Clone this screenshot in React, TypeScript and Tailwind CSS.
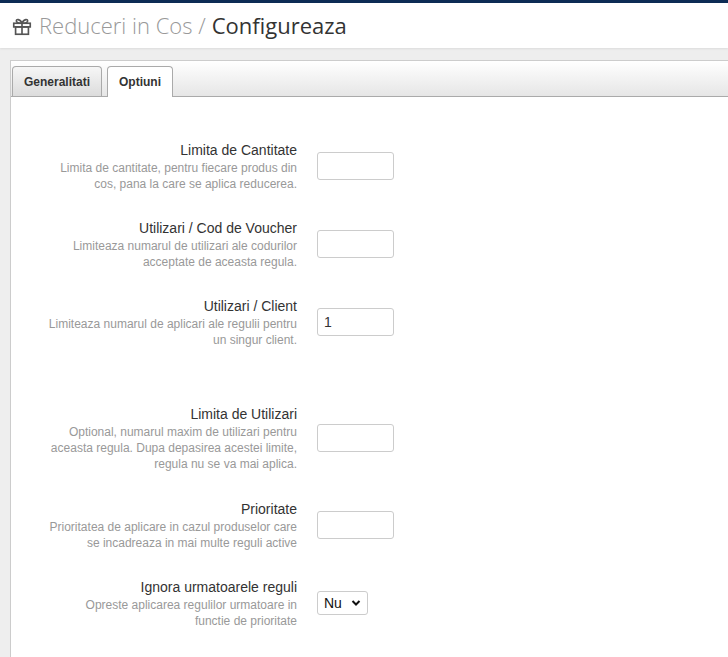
import React from "react";

const rows = [
  { t: "Limita de Cantitate", d: ["Limita de cantitate, pentru fiecare produs din", "cos, pana la care se aplica reducerea."], v: "" },
  { t: "Utilizari / Cod de Voucher", d: ["Limiteaza numarul de utilizari ale codurilor", "acceptate de aceasta regula."], v: "" },
  { t: "Utilizari / Client", d: ["Limiteaza numarul de aplicari ale regulii pentru", "un singur client."], v: "1" },
];
const rows2 = [
  { t: "Limita de Utilizari", d: ["Optional, numarul maxim de utilizari pentru", "aceasta regula. Dupa depasirea acestei limite,", "regula nu se va mai aplica."] },
  { t: "Prioritate", d: ["Prioritatea de aplicare in cazul produselor care", "se incadreaza in mai multe reguli active"] },
];

function Label({ t, d }: { t: string; d: string[] }) {
  return (
    <div className="w-[256px] text-right">
      <div className="text-[14px] leading-[20px] text-[#333]">{t}</div>
      <div className="text-[12px] leading-[16px] text-[#999]">
        {d.map((x) => (<div key={x}>{x}</div>))}
      </div>
    </div>
  );
}

export default function App() {
  return (
    <div className="min-h-[657px] bg-[#eeeeee]" style={{ fontFamily: '"Liberation Sans", Arial, sans-serif' }}>
      <div className="h-[3px] bg-[#0d2c55]" />
      <div className="h-[45px] bg-white flex items-center pl-[11px] shadow-[0_1px_2px_rgba(0,0,0,0.08)]" style={{ fontFamily: '"Open Sans", sans-serif' }}>
        <svg width="22" height="22" viewBox="0 0 24 24" fill="none" stroke="#555" strokeWidth="1.8" className="mr-[6px]">
          <rect x="3" y="9" width="18" height="4" />
          <rect x="5" y="13" width="14" height="8" />
          <path d="M12 9v12" />
          <path d="M12 9c-2-5-7-5-6-2 0.5 1.5 4 2 6 2zM12 9c2-5 7-5 6-2-0.5 1.5-4 2-6 2z" />
        </svg>
        <span className="text-[22px] text-[#999] font-light">Reduceri in Cos /</span>
        <span className="text-[22px] text-[#333] ml-[6px]">Configureaza</span>
      </div>
      <div className="ml-[10px] mt-[12px] bg-white border-l border-t border-[#ccc]">
        <div className="h-[36px] flex items-end gap-[5px] pl-[1px] border-b border-[#aaa] bg-gradient-to-b from-white to-[#e6e6e6]">
          <div className="h-[30px] px-[11px] flex items-center text-[12px] font-bold text-[#333] border border-b-0 border-[#aaa] rounded-t-[4px] bg-gradient-to-b from-[#f6f6f6] to-[#dcdcdc]">Generalitati</div>
          <div className="h-[31px] -mb-px px-[11px] flex items-center text-[12px] font-bold text-[#333] border border-b-0 border-[#aaa] rounded-t-[4px] bg-white">Optiuni</div>
        </div>
        <div className="pl-[30px] pt-[43px] pb-[40px] flex flex-col">
          {rows.map((r, i) => (
            <div key={r.t} className={`flex items-center gap-[20px] ${i > 0 ? "mt-[26px]" : ""}`}>
              <Label t={r.t} d={r.d} />
              <input defaultValue={r.v} className="w-[77px] h-[28px] border border-[#ccc] rounded-[3px] px-[6px] text-[14px] text-[#333]" />
            </div>
          ))}
          {rows2.map((r, i) => (
            <div key={r.t} className={`flex items-center gap-[20px] ${i === 0 ? "mt-[56px]" : "mt-[27px]"}`}>
              <Label t={r.t} d={r.d} />
              <input className="w-[77px] h-[28px] border border-[#ccc] rounded-[3px] px-[6px] text-[14px]" />
            </div>
          ))}
          <div className="flex items-center gap-[20px] mt-[26px]">
            <Label t="Ignora urmatoarele reguli" d={["Opreste aplicarea regulilor urmatoare in", "functie de prioritate"]} />
            <div className="w-[51px] h-[24px] border border-[#ccc] rounded-[3px] flex items-center justify-between px-[6px] text-[14px] text-[#111]">
              <span>Nu</span>
              <svg width="10" height="8" viewBox="0 0 10 8"><path d="M1.5 2l3.5 3.5L8.5 2" stroke="#111" strokeWidth="2" fill="none" /></svg>
            </div>
          </div>
        </div>
      </div>
    </div>
  );
}
